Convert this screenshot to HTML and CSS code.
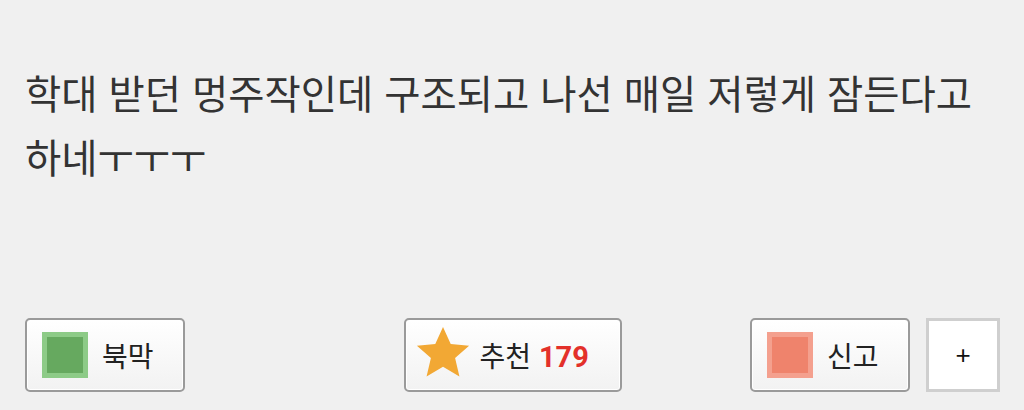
FILE: index.html
```html
<!DOCTYPE html>
<html lang="ko">
<head>
<meta charset="utf-8">
<link rel="stylesheet" href="styles.css">
</head>
<body>
<main class="post">
  <p class="content">학대 받던 멍주작인데 구조되고 나선 매일 저렇게 잠든다고 하네ㅜㅜㅜ</p>
  <div class="actions">
    <div class="left">
      <button class="btn"><span class="sq sq-green"></span><span class="label">북막</span></button>
    </div>
    <div class="center">
      <button class="btn btn-rec">
        <svg class="star" viewBox="0 0 24 24" width="62" height="58"><path d="M12 1.2l3.2 7.1 7.6.7-5.8 5.1 1.8 7.6L12 17.7l-6.8 4 1.8-7.6L1.2 9l7.6-.7z" fill="#f2a834"/></svg>
        <span class="label">추천 <b class="count">179</b></span>
      </button>
    </div>
    <div class="right">
      <button class="btn"><span class="sq sq-red"></span><span class="label">신고</span></button>
      <button class="plus">+</button>
    </div>
  </div>
</main>
</body>
</html>
```
FILE: styles.css
```css
html, body {
  margin: 0;
  padding: 0;
  background: #f0f0f0;
}
body {
  font-family: "Noto Sans CJK KR", "Noto Sans", sans-serif;
  color: #333;
}
.post {
  padding: 0 24px 0 25px;
}
.content {
  margin: 0;
  padding: 60px 0 0 0;
  font-size: 39.4px;
  line-height: 64px;
  height: 258px;
  word-break: keep-all;
}
.actions {
  display: grid;
  grid-template-columns: 1fr auto 1fr;
  align-items: center;
}
.left { display: flex; justify-content: flex-start; }
.center { display: flex; justify-content: center; }
.right { display: flex; justify-content: flex-end; gap: 16px; align-items: center; }
.btn {
  display: flex;
  align-items: center;
  height: 74px;
  box-sizing: border-box;
  border: 2px solid #9a9a9a;
  border-radius: 5px;
  background: linear-gradient(#ffffff, #f2f2f2);
  box-shadow: inset 0 0 0 1px #fff;
  font-family: "Noto Sans CJK KR", "Noto Sans", sans-serif;
  font-size: 28px;
  color: #222;
  padding: 0 12px 0 15px;
  width: 160px;
  cursor: pointer;
}
.btn-rec {
  width: 218px;
  padding-left: 6px;
}
.sq {
  width: 46px;
  height: 46px;
  box-sizing: border-box;
  flex: none;
  margin-right: 14px;
}
.sq-green {
  background: #66a95f;
  border: 5px solid #8dcb87;
}
.sq-red {
  background: #ef836c;
  border: 5px solid #f4a08e;
}
.star {
  flex: none;
  margin-right: 6px;
  margin-top: -4px;
}
.label {
  white-space: nowrap;
}
.count {
  color: #e3302a;
  font-weight: 700;
  font-size: 29px;
  font-family: "Roboto", "Noto Sans", sans-serif;
}
.plus {
  width: 74px;
  height: 74px;
  box-sizing: border-box;
  border: 3px solid #cfcfcf;
  background: #fff;
  font-family: "Liberation Sans", sans-serif;
  font-size: 26px;
  color: #111;
  padding: 0;
  cursor: pointer;
}
```
